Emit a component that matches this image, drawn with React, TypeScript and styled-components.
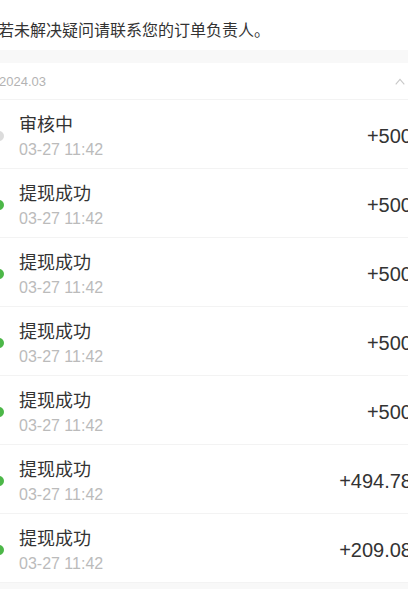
import styled, { createGlobalStyle } from 'styled-components'

const GlobalStyle = createGlobalStyle`
    html, body {
        margin: 0;
        padding: 0;
        background: #f8f8f8;
        overflow: hidden;
    }

    body {
        font-family: 'Liberation Sans', 'Noto Sans CJK SC', sans-serif;
        -webkit-font-smoothing: antialiased;
    }
`

const Page = styled.div`
    width: 408px;
    height: 589px;
    overflow: hidden;
`

// the list is a little wider than the screen, the edges get cut off
const Content = styled.div`
    width: 448px;
    margin-left: -20px;
`

const Notice = styled.div`
    background: #fff;
    padding: 11px 0 0 18px;
    height: 39px;
    line-height: 40px;
    font-size: 16px;
    color: #333;
`

const Spacer = styled.div`
    height: 13px;
    background: #f8f8f8;
`

const MonthHeader = styled.div`
    display: flex;
    align-items: center;
    justify-content: space-between;
    height: 36px;
    padding: 0 23px 0 19px;
    background: #fff;
    border-bottom: 1px solid #f3f3f3;
    font-size: 13px;
    color: #b3b3b3;
`

const Row = styled.div`
    display: flex;
    align-items: center;
    height: 64px;
    padding: 4px 16px 0 13.5px;
    background: #fff;
    border-bottom: 1px solid #f3f3f3;
`

const Dot = styled.span<{ $done: boolean }>`
    flex: none;
    width: 10px;
    height: 10px;
    border-radius: 50%;
    margin-right: 15.5px;
    background: ${(p) => (p.$done ? '#4cb748' : '#dcdcdc')};
`

const Info = styled.div`
    flex: 1;
    align-self: stretch;
    display: flex;
    flex-direction: column;
    padding-top: 9px;
`

const Title = styled.div`
    font-size: 18px;
    line-height: 24px;
    color: #333;
`

const Time = styled.div`
    font-size: 16px;
    line-height: 26px;
    color: #bbb;
`

const Amount = styled.div`
    font-size: 20px;
    color: #333;
    white-space: nowrap;
`

const records = [
    { title: '审核中', done: false, amount: '+500' },
    { title: '提现成功', done: true, amount: '+500' },
    { title: '提现成功', done: true, amount: '+500' },
    { title: '提现成功', done: true, amount: '+500' },
    { title: '提现成功', done: true, amount: '+500' },
    { title: '提现成功', done: true, amount: '+494.78' },
    { title: '提现成功', done: true, amount: '+209.08' },
]

function Chevron() {
    return (
        <svg width='10' height='7' viewBox='0 0 10 7' fill='none'>
            <path
                d='M0.7 6.3 L5 1.4 L9.3 6.3'
                stroke='#c8c8c8'
                strokeWidth='1.1'
            />
        </svg>
    )
}

export default function App() {
    return (
        <Page>
            <GlobalStyle />
            <Content>
                <Notice>若未解决疑问请联系您的订单负责人。</Notice>
                <Spacer />
                <MonthHeader>
                    <span>2024.03</span>
                    <Chevron />
                </MonthHeader>
                {records.map((r, i) => (
                    <Row key={i}>
                        <Dot $done={r.done} />
                        <Info>
                            <Title>{r.title}</Title>
                            <Time>03-27 11:42</Time>
                        </Info>
                        <Amount>{r.amount}</Amount>
                    </Row>
                ))}
            </Content>
        </Page>
    )
}
